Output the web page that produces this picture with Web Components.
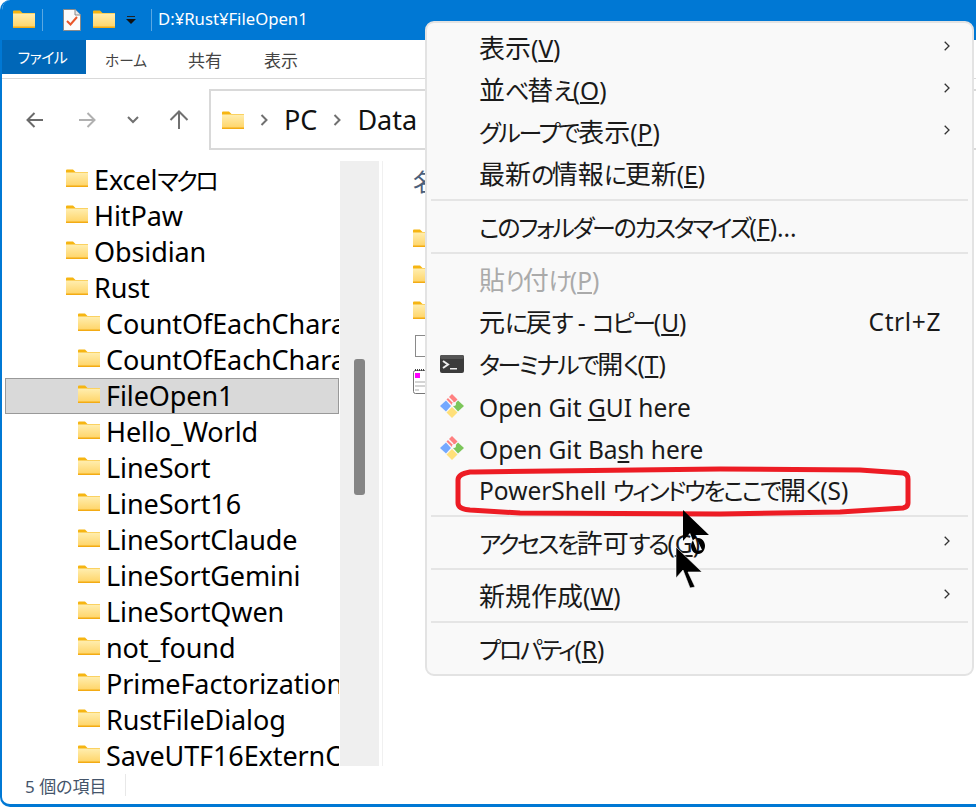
<!DOCTYPE html>
<html lang="ja">
<head>
<meta charset="utf-8">
<title>FileOpen1</title>
<style>
	html, body { margin: 0; padding: 0; background: #fff; }
	body { width: 976px; height: 807px; overflow: hidden; font-family: "Noto Sans", "Noto Sans CJK JP", sans-serif; font-feature-settings: "palt"; }
</style>
</head>
<body>
<explorer-window>
	<title-bar slot="title" path="D:¥Rust¥FileOpen1"></title-bar>
	<ribbon-tabs slot="ribbon"></ribbon-tabs>
	<nav-bar slot="nav"></nav-bar>
	<tree-pane slot="tree">
		<tree-row level="1">Excelマクロ</tree-row>
		<tree-row level="1">HitPaw</tree-row>
		<tree-row level="1">Obsidian</tree-row>
		<tree-row level="1">Rust</tree-row>
		<tree-row level="2">CountOfEachCharacter</tree-row>
		<tree-row level="2">CountOfEachCharacter2</tree-row>
		<tree-row level="2" selected>FileOpen1</tree-row>
		<tree-row level="2">Hello_World</tree-row>
		<tree-row level="2">LineSort</tree-row>
		<tree-row level="2">LineSort16</tree-row>
		<tree-row level="2">LineSortClaude</tree-row>
		<tree-row level="2">LineSortGemini</tree-row>
		<tree-row level="2">LineSortQwen</tree-row>
		<tree-row level="2">not_found</tree-row>
		<tree-row level="2">PrimeFactorization</tree-row>
		<tree-row level="2">RustFileDialog</tree-row>
		<tree-row level="2">SaveUTF16ExternCrate</tree-row>
	</tree-pane>
	<file-pane slot="files"></file-pane>
	<status-bar slot="status">5 個の項目</status-bar>
</explorer-window>

<context-menu>
	<menu-item arrow>表示(<u>V</u>)</menu-item>
	<menu-item arrow>並べ替え(<u>O</u>)</menu-item>
	<menu-item arrow>グループで表示(<u>P</u>)</menu-item>
	<menu-item>最新の情報に更新(<u>E</u>)</menu-item>
	<menu-sep></menu-sep>
	<menu-item>このフォルダーのカスタマイズ(<u>F</u>)...</menu-item>
	<menu-sep></menu-sep>
	<menu-item disabled>貼り付け(<u>P</u>)</menu-item>
	<menu-item shortcut="Ctrl+Z">元に戻す - コピー(<u>U</u>)</menu-item>
	<menu-item icon="terminal">ターミナルで開く(<u>T</u>)</menu-item>
	<menu-item icon="git" latin>Open Git <u>G</u>UI here</menu-item>
	<menu-item icon="git" latin>Open Git Ba<u>s</u>h here</menu-item>
	<menu-item>PowerShell ウィンドウをここで開く(S)</menu-item>
	<menu-sep></menu-sep>
	<menu-item arrow>アクセスを許可する(<u>G</u>)</menu-item>
	<menu-sep></menu-sep>
	<menu-item arrow>新規作成(<u>W</u>)</menu-item>
	<menu-sep></menu-sep>
	<menu-item>プロパティ(<u>R</u>)</menu-item>
</context-menu>

<screen-marks></screen-marks>

<script>
const FOLDER_SVG = `
	<svg width="22" height="18" viewBox="0 0 22 18" aria-hidden="true">
		<defs><linearGradient id="fg" x1="0" y1="0" x2="0" y2="1">
			<stop offset="0" stop-color="#ffeeb0"/><stop offset="1" stop-color="#ffd466"/>
		</linearGradient></defs>
		<path d="M0 1.5 Q0 .5 1 .5 H7 L9.5 3 H22 V6 H0 Z" fill="#f6b512"/>
		<rect x="0" y="3.500" width="22" height="14" fill="url(#fg)"/>
		<rect x="0" y="16.500" width="22" height="1.500" fill="#f3ab14"/>
	</svg>`;

// the real font has narrow kana and wide kanji, so each run gets its own class
function splitRuns(host) {
	for (const node of [...host.childNodes]) {
		if (node.nodeType !== 3) continue;
		const parts = node.textContent.split(/([\u3040-\u30ff]+|[\u4e00-\u9fff]+)/).filter(Boolean);
		const frag = document.createDocumentFragment();
		for (const part of parts) {
			if (/^[\u3040-\u30ff]/.test(part) || /^[\u4e00-\u9fff]/.test(part)) {
				const span = document.createElement("span");
				span.className = /^[\u3040-\u30ff]/.test(part) ? "kana" : "kanji";
				span.textContent = part;
				frag.appendChild(span);
			} else {
				frag.appendChild(document.createTextNode(part));
			}
		}
		host.replaceChild(frag, node);
	}
}

class FolderIcon extends HTMLElement {
	connectedCallback() {
		const root = this.attachShadow({ mode: "open" });
		root.innerHTML = `<style>:host { display: inline-flex; flex: none; width: 22px; height: 18px; }</style>${FOLDER_SVG}`;
	}
}

class ExplorerWindow extends HTMLElement {
	constructor() {
		super();
		this.attachShadow({ mode: "open" }).innerHTML = `
			<style>
				:host { display: flex; flex-direction: column; width: 976px; height: 807px; box-sizing: border-box;
					border-left: 2px solid #0078d4; border-bottom: 3px solid #0078d4; border-radius: 10px 0 0 10px; overflow: hidden; background: #fff; }
				.main { flex: none; height: 605px; display: flex; }
				::slotted([slot="status"]) { flex: 1; }
			</style>
			<slot name="title"></slot>
			<slot name="ribbon"></slot>
			<slot name="nav"></slot>
			<div class="main"><slot name="tree"></slot><slot name="files"></slot></div>
			<slot name="status"></slot>`;
	}
}

class TitleBar extends HTMLElement {
	connectedCallback() {
		this.attachShadow({ mode: "open" }).innerHTML = `
			<style>
				:host { display: flex; align-items: center; height: 40px; margin-left: -2px; padding-left: 13px; background: #0078d4; color: #fff; font-size: 16.700px; flex: none; }
				.bar { width: 1px; height: 22px; background: #5ba8e2; }
				.check { margin-left: 20px; display: flex; }
				.dd { margin: 0 15px 0 11px; display: flex; }
				.path { margin-left: 6px; line-height: 38px; height: 40px; }
				folder-icon { transform: translateY(-1px); }
			</style>
			<folder-icon></folder-icon>
			<span class="bar" style="margin-left:7px"></span>
			<span class="check">
				<svg width="18" height="22" viewBox="0 0 18 22">
					<path d="M.5 .5 H12 L17.500 6 V21.500 H.5 Z" fill="#fbfbfb" stroke="#8a8a8a"/>
					<path d="M12 .5 V6 H17.500" fill="#e6e6e6" stroke="#8a8a8a"/>
					<path d="M4 12 L7.500 15.500 L14 8" fill="none" stroke="#e8562a" stroke-width="2"/>
				</svg>
			</span>
			<folder-icon style="margin-left:12px"></folder-icon>
			<span class="dd">
				<svg width="10" height="9" viewBox="0 0 10 9"><rect x="1" y="0" width="8" height="1" fill="#222"/><path d="M0 3 H10 L5 8 Z" fill="#111"/></svg>
			</span>
			<span class="bar"></span>
			<span class="path">${this.getAttribute("path")}</span>`;
	}
}

class RibbonTabs extends HTMLElement {
	constructor() {
		super();
		this.attachShadow({ mode: "open" }).innerHTML = `
			<style>
				:host { display: flex; flex: none; height: 38px; border-bottom: 1px solid #d9d9d9; font-size: 17px; color: #444; }
				.tab { height: 34px; display: flex; align-items: center; box-sizing: border-box; padding-top: 4px; }
				.tab.on { width: 84px; padding: 0 3px 1px 0; justify-content: center; background: #0067b8; color: #fff; font-size: 15px; letter-spacing: -.6px; }
				.tab.t2 { margin-left: 19px; font-size: 14.700px; }
				.tab.t3 { margin-left: 41px; }
				.tab.t4 { margin-left: 42px; }
			</style>
			<div class="tab on">ファイル</div>
			<div class="tab t2">ホーム</div>
			<div class="tab t3">共有</div>
			<div class="tab t4">表示</div>`;
	}
}

class NavBar extends HTMLElement {
	connectedCallback() {
		this.attachShadow({ mode: "open" }).innerHTML = `
			<style>
				:host { display: flex; flex: none; height: 82px; box-sizing: border-box; padding: 10px 0 11px 20px; }
				.btn { display: flex; align-items: center; justify-content: center; flex: none; }
				.addr { flex: 1; margin-left: 20px; display: flex; align-items: center; gap: 16px; padding-left: 11px;
					border: solid #d9d9d9; border-width: 2px 0 2px 2px; font-size: 27px; color: #111; }
				.gt { width: 8px; height: 12px; display: flex; }
			</style>
			<span class="btn" style="width:26px">
				<svg width="18" height="16" viewBox="0 0 18 16"><path d="M17 8 H1.500 M8.500 1 L1.500 8 L8.500 15" fill="none" stroke="#6a6a6a" stroke-width="2"/></svg>
			</span>
			<span class="btn" style="width:18px;margin-left:30px">
				<svg width="18" height="16" viewBox="0 0 18 16"><path d="M1 8 H16.500 M9.500 1 L16.500 8 L9.500 15" fill="none" stroke="#b0b0b0" stroke-width="2"/></svg>
			</span>
			<span class="btn" style="width:12px;margin-left:31px">
				<svg width="12" height="8" viewBox="0 0 12 8"><path d="M1 1 L6 6 L11 1" fill="none" stroke="#707070" stroke-width="2"/></svg>
			</span>
			<span class="btn" style="width:20px;margin-left:30px">
				<svg width="20" height="20" viewBox="0 0 20 20"><path d="M10 19 V2 M1.500 10 L10 1.500 L18.500 10" fill="none" stroke="#707070" stroke-width="2"/></svg>
			</span>
			<div class="addr">
				<folder-icon></folder-icon>
				<svg class="gt" viewBox="0 0 8 12"><path d="M1.500 1 L6.500 6 L1.500 11" fill="none" stroke="#707070" stroke-width="2"/></svg>
				<span>PC</span>
				<svg class="gt" viewBox="0 0 8 12"><path d="M1.500 1 L6.500 6 L1.500 11" fill="none" stroke="#707070" stroke-width="2"/></svg>
				<span>Data</span>
			</div>`;
	}
}

class TreePane extends HTMLElement {
	constructor() {
		super();
		this.attachShadow({ mode: "open" }).innerHTML = `
			<style>
				:host { display: flex; flex: none; width: 381px; height: 605px; }
				.list { width: 334px; margin: 0 1px 0 3px; flex: none; overflow: hidden; display: flex; flex-direction: column; padding-top: 1px; }
				.track { width: 39px; background: #efefef; flex: none; display: flex; justify-content: center; padding-top: 198px; box-sizing: border-box; height: 605px; }
				.thumb { width: 11px; height: 136px; border-radius: 3px; background: #858585; }
				.line { width: 1px; margin-left: 3px; background: #f0f0f0; }
			</style>
			<div class="list"><slot></slot></div>
			<div class="track"><div class="thumb"></div></div>
			<div class="line"></div>`;
	}
}

class TreeRow extends HTMLElement {
	connectedCallback() {
		const indent = this.getAttribute("level") === "2" ? 72 : 60;
		splitRuns(this);
		this.attachShadow({ mode: "open" }).innerHTML = `
			<style>
				:host { display: flex; flex: none; height: 36px; box-sizing: border-box; align-items: center; gap: 6px; padding-left: ${indent}px; font-size: 27px; color: #000; white-space: nowrap; border: 1px solid transparent; letter-spacing: -.1px; }
				:host([selected]) { background: #d9d9d9; border-color: #999; }
				folder-icon { transform: translateY(-2px); }
				.text { transform: translateY(-1px); }
				::slotted(.kana) { font-size: 24px; letter-spacing: -2.600px; }
			</style>
			<folder-icon></folder-icon><span class="text"><slot></slot></span>`;
	}
}

class FilePane extends HTMLElement {
	connectedCallback() {
		this.attachShadow({ mode: "open" }).innerHTML = `
			<style>
				:host { display: flex; flex-direction: column; flex: 1; padding: 3px 0 0 30px; font-size: 24px; color: #4c607a; overflow: hidden; }
				.head { height: 36px; line-height: 36px; margin-bottom: 20px; }
				.row { height: 36px; display: flex; align-items: center; flex: none; }
				.box { width: 13px; height: 20px; margin-left: 2px; border: 1px solid #8a8a8a; border-right: 0; }
			</style>
			<div class="head">名前</div>
			<div class="row"><folder-icon></folder-icon></div>
			<div class="row"><folder-icon></folder-icon></div>
			<div class="row"><folder-icon></folder-icon></div>
			<div class="row"><span class="box"></span></div>
			<div class="row">
				<svg width="14" height="26" viewBox="0 0 14 26">
					<rect x=".5" y="1.500" width="20" height="23" rx="2" fill="#fff" stroke="#777"/>
					<path d="M2 1 H14" stroke="#444" stroke-width="2" stroke-dasharray="1 1"/>
					<rect x="2" y="4" width="5" height="5" fill="#f0f"/>
					<rect x="2" y="12" width="10" height="2" fill="#d4d4d4"/>
					<rect x="2" y="16" width="10" height="2" fill="#d4d4d4"/>
					<rect x="2" y="20" width="4" height="2" fill="#d4d4d4"/>
				</svg>
			</div>`;
	}
}

class StatusBar extends HTMLElement {
	constructor() {
		super();
		this.attachShadow({ mode: "open" }).innerHTML = `
			<style>
				:host { display: flex; align-items: center; padding-left: 23px; font-size: 17px; color: #44546a; }
				.bar { width: 1px; height: 22px; margin-left: 18px; background: #e8e8e8; }
			</style>
			<slot></slot><span class="bar"></span>`;
	}
}

class ContextMenu extends HTMLElement {
	constructor() {
		super();
		this.attachShadow({ mode: "open" }).innerHTML = `
			<style>
				:host { position: absolute; left: 425px; top: 21px; width: 549px; height: 655px; box-sizing: border-box; padding: 4px 0 2px; display: flex; flex-direction: column;
					background: #f9f9f9; border: 2px solid #e3e3e3; border-radius: 9px; color: #1a1a1a; font-size: 24.500px; }
			</style>
			<slot></slot>`;
	}
}

class MenuSep extends HTMLElement {
	constructor() {
		super();
		this.attachShadow({ mode: "open" }).innerHTML = `
			<style>
				:host { display: block; flex: none; height: 2px; margin: 4px 4px 5px; background: #e5e5e5; }
			</style>`;
	}
}

class MenuItem extends HTMLElement {
	connectedCallback() {
		const kind = this.getAttribute("icon");
		let icon = "";
		if (kind === "terminal") {
			icon = `<svg width="24" height="18" viewBox="0 0 24 18"><rect width="24" height="18" rx="2" fill="#3c3c3c"/><rect width="24" height="4" rx="2" fill="#555"/><path d="M3 6 L8 9.500 L3 13" fill="none" stroke="#eee" stroke-width="2"/><rect x="10" y="13" width="7" height="1.500" fill="#eee"/></svg>`;
		} else if (kind === "git") {
			icon = `<svg width="24" height="24" viewBox="0 0 24 24">
				<path d="M12 0 L17.500 5.500 L12 11 L6.500 5.500 Z" fill="#ff8080"/>
				<path d="M18 6.500 L24 12 L18 17.500 L13 12 Z" fill="#7cc65a"/>
				<path d="M12 13 L17.500 18.500 L12 24 L6.500 18.500 Z" fill="#ffe07a"/>
				<path d="M6 6.500 L11 12 L6 17.500 L0 12 Z" fill="#74a9ff"/>
				<path d="M8 3 L13 8" stroke="#f9f9f9" stroke-width="1.500"/><circle cx="14" cy="10" r="2" fill="#f9f9f9"/>
			</svg>`;
		}
		const shortcut = this.getAttribute("shortcut");
		const arrow = this.hasAttribute("arrow");
		splitRuns(this);
		this.attachShadow({ mode: "open" }).innerHTML = `
			<style>
				:host { display: flex; flex: none; height: 42px; align-items: center; white-space: nowrap; }
				:host([disabled]) { color: #aaa; }
				:host([latin]) .label { padding: 2px 0 0; }
				.icon { width: 24px; margin-left: 13px; margin-right: 15px; display: flex; justify-content: center; flex: none; }
				.label { flex: 1; padding-bottom: 2px; }
				.key { margin-right: 31px; padding-bottom: 2px; letter-spacing: .6px; }
				.arrow { margin-right: 22px; display: flex; transform: translateY(-2px); }
				::slotted(.kana) { font-size: 24px; letter-spacing: -2.300px; }
				::slotted(.kanji) { font-size: 26px; }
			</style>
			<span class="icon">${icon}</span>
			<span class="label"><slot></slot></span>
			${shortcut ? `<span class="key">${shortcut}</span>` : ""}
			${arrow ? `<span class="arrow"><svg width="6" height="10" viewBox="0 0 6 10"><path d="M.7 .7 L5 5 L.7 9.300" fill="none" stroke="#333" stroke-width="1.300"/></svg></span>` : ""}`;
	}
}

class ScreenMarks extends HTMLElement {
	constructor() {
		super();
		const cursor = "M0 0 L26 25 H12 L19 40 L14 41 L7 23 L0 31 Z";
		this.attachShadow({ mode: "open" }).innerHTML = `
			<style>
				:host { position: absolute; left: 0; top: 0; width: 976px; height: 807px; pointer-events: none; }
				svg { display: block; }
			</style>
			<svg width="976" height="807" viewBox="0 0 976 807">
				<path d="M475 472 L720 469 L860 470 L903 473 Q908 474 908 479 V503 Q908 507 903 508 L840 512 L720 514 L520 513 L470 510 Q458 509 458 503 V480 Q458 474 470 472 Z" fill="none" stroke="#ed1c24" stroke-width="5"/>
				<path d="${cursor} M15 28 a7 8 0 1 0 .01 0 Z" fill-rule="evenodd" transform="translate(683 510)" fill="#000"/>
				<path d="${cursor}" transform="translate(676 547)" fill="#000" stroke="#fff" stroke-width=".6"/>
			</svg>`;
	}
}

window.customElements.define("folder-icon", FolderIcon);
window.customElements.define("explorer-window", ExplorerWindow);
window.customElements.define("title-bar", TitleBar);
window.customElements.define("ribbon-tabs", RibbonTabs);
window.customElements.define("nav-bar", NavBar);
window.customElements.define("tree-pane", TreePane);
window.customElements.define("tree-row", TreeRow);
window.customElements.define("file-pane", FilePane);
window.customElements.define("status-bar", StatusBar);
window.customElements.define("context-menu", ContextMenu);
window.customElements.define("menu-sep", MenuSep);
window.customElements.define("menu-item", MenuItem);
window.customElements.define("screen-marks", ScreenMarks);
</script>
</body>
</html>
